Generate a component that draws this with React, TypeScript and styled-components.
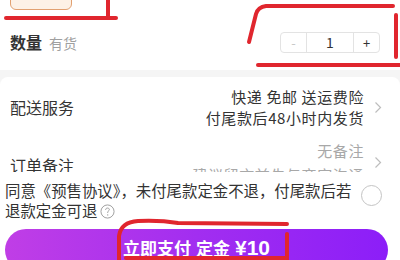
import React from "react";
import styled, { createGlobalStyle } from "styled-components";

const Global = createGlobalStyle`
  html, body { margin: 0; padding: 0; background: #f5f5f5; }
  body { font-family: "Noto Sans CJK SC", "Noto Sans", sans-serif; color: #333; }
  * { box-sizing: border-box; }
`;

const Page = styled.div`
  position: relative;
  width: 400px;
  height: 260px;
  overflow: hidden;
  background: #f5f5f5;
`;

const TopSection = styled.div`
  height: 70px;
  background: #fff;
  padding: 0 10px;
  display: flex;
  flex-direction: column;
`;

const SpecChip = styled.div`
  width: 62px;
  height: 24px;
  margin-top: -14px;
  border: 1px solid #e2a070;
  border-radius: 6px;
  background: #fdf1e6;
`;

const QuantityRow = styled.div`
  margin-top: 21px;
  height: 22px;
  display: flex;
  align-items: center;
  justify-content: space-between;
`;

const LabelGroup = styled.div`
  display: flex;
  align-items: baseline;
  gap: 7px;
`;

const BoldLabel = styled.span`
  font-size: 16px;
  font-weight: 700;
  color: #333;
`;

const Hint = styled.span`
  font-size: 14px;
  color: #a0a0a0;
`;

const Stepper = styled.div`
  display: flex;
  height: 21px;
  margin-right: 10px;
  border: 1px solid #e3e3e3;
  border-radius: 4px;
  overflow: hidden;
`;

const StepBtn = styled.div<{ $disabled?: boolean }>`
  width: 25px;
  display: flex;
  align-items: center;
  justify-content: center;
  font-size: 13px;
  color: ${(p) => (p.$disabled ? "#c8c8c8" : "#333")};
`;

const StepValue = styled.div`
  width: 48px;
  display: flex;
  align-items: center;
  justify-content: center;
  font-size: 14px;
  color: #333;
  border-left: 1px solid #e3e3e3;
  border-right: 1px solid #e3e3e3;
`;

const Card = styled.div`
  margin-top: 7px;
  background: #fff;
  border-radius: 8px 8px 0 0;
  padding: 0 18px 0 10px;
`;

const InfoRow = styled.div<{ $height: number }>`
  height: ${(p) => p.$height}px;
  display: flex;
  align-items: center;
  justify-content: space-between;
`;

const RowLabel = styled.span<{ $shift?: number }>`
  font-size: 16px;
  color: #333;
  position: relative;
  top: ${(p) => p.$shift ?? 0}px;
`;

const RowValue = styled.div`
  display: flex;
  align-items: center;
  gap: 10px;
`;

const ValueLines = styled.div`
  display: flex;
  flex-direction: column;
  align-items: flex-end;
`;

const ValueLine = styled.span<{ $muted?: boolean; $gap?: number }>`
  font-size: 15px;
  letter-spacing: 0.6px;
  line-height: 21px;
  margin-top: ${(p) => p.$gap ?? 0}px;
  color: ${(p) => (p.$muted ? "#a8a8a8" : "#333")};
  white-space: nowrap;
`;

const BottomPanel = styled.div`
  position: absolute;
  left: 0;
  right: 0;
  top: 172px;
  bottom: 0;
  background: #fff;
  padding: 8px 5px 0 5px;
`;

const AgreeRow = styled.div`
  display: flex;
  align-items: flex-start;
  justify-content: space-between;
`;

const AgreeText = styled.div`
  font-size: 15.4px;
  line-height: 20px;
  color: #333;
  white-space: nowrap;
`;

const HelpIcon = styled.span`
  display: inline-flex;
  vertical-align: -2px;
  margin-left: 3px;
`;

const Radio = styled.div`
  width: 21px;
  height: 21px;
  margin-top: 5px;
  margin-right: 13px;
  border: 1px solid #c4c4c4;
  border-radius: 50%;
`;

const PayButton = styled.div`
  margin-top: 9px;
  width: 383px;
  height: 42px;
  border-radius: 21px;
  background: linear-gradient(90deg, #c03ee6 0%, #a22ef0 50%, #8c1ef8 100%);
  display: flex;
  align-items: center;
  justify-content: center;
  padding-bottom: 5px;
  color: #fff;
  font-weight: 700;
  font-size: 17px;
  gap: 5px;
`;

const Amount = styled.span`
  font-size: 21px;
  font-family: "Liberation Sans", "Noto Sans", sans-serif;
`;

const Annotations = styled.svg`
  position: absolute;
  left: 0;
  top: 0;
  pointer-events: none;
`;

const Chevron = () => (
  <svg width="8" height="13" viewBox="0 0 8 13">
    <path d="M1.5 1.5 L6.5 6.5 L1.5 11.5" fill="none" stroke="#bdbdbd" strokeWidth="1.2" />
  </svg>
);

export default function App() {
  return (
    <Page>
      <Global />
      <TopSection>
        <SpecChip />
        <QuantityRow>
          <LabelGroup>
            <BoldLabel>数量</BoldLabel>
            <Hint>有货</Hint>
          </LabelGroup>
          <Stepper>
            <StepBtn $disabled>-</StepBtn>
            <StepValue>1</StepValue>
            <StepBtn>+</StepBtn>
          </Stepper>
        </QuantityRow>
      </TopSection>
      <Card>
        <InfoRow $height={60}>
          <RowLabel>配送服务</RowLabel>
          <RowValue>
            <ValueLines>
              <ValueLine>快递 免邮 送运费险</ValueLine>
              <ValueLine>付尾款后48小时内发货</ValueLine>
            </ValueLines>
            <Chevron />
          </RowValue>
        </InfoRow>
        <InfoRow $height={50}>
          <RowLabel $shift={3}>订单备注</RowLabel>
          <RowValue>
            <ValueLines>
              <ValueLine $muted>无备注</ValueLine>
              <ValueLine $muted $gap={3}>建议留言前先与商家沟通</ValueLine>
            </ValueLines>
            <Chevron />
          </RowValue>
        </InfoRow>
      </Card>
      <BottomPanel>
        <AgreeRow>
          <AgreeText>
            同意《预售协议》，未付尾款定金不退，付尾款后若
            <br />
            退款定金可退
            <HelpIcon>
              <svg width="15" height="15" viewBox="0 0 16 16">
                <circle cx="8" cy="8" r="7" fill="none" stroke="#9a9a9a" strokeWidth="1" />
                <path d="M6 6.3 C6 4.9 7 4.3 8 4.3 C9.1 4.3 10 5 10 6 C10 7.2 8.2 7.4 8.2 8.8 L8.2 9.6" fill="none" stroke="#9a9a9a" strokeWidth="1" />
                <circle cx="8.2" cy="11.6" r="0.7" fill="#9a9a9a" />
              </svg>
            </HelpIcon>
          </AgreeText>
          <Radio />
        </AgreeRow>
        <PayButton>
          <span>立即支付</span>
          <span>定金</span>
          <Amount>¥10</Amount>
        </PayButton>
      </BottomPanel>
      <Annotations width="400" height="260" viewBox="0 0 400 260">
        <g fill="none" stroke="#e0262e" strokeWidth="4" strokeLinecap="round" strokeLinejoin="round">
          <path d="M108 0 L108 17" />
          <path d="M6 18 L116 18" />
          <path d="M249 42 L256 14 Q258 7 266 6 L393 6" />
          <path d="M396 15 L396 57" />
          <path d="M258 65 L400 65" />
          <path d="M119 260 L119 236 Q121 222 138 221 Q160 220 178 223 L287 224" />
          <path d="M287 234 L287 260" />
          <path d="M126 258 L286 258" />
        </g>
      </Annotations>
    </Page>
  );
}
